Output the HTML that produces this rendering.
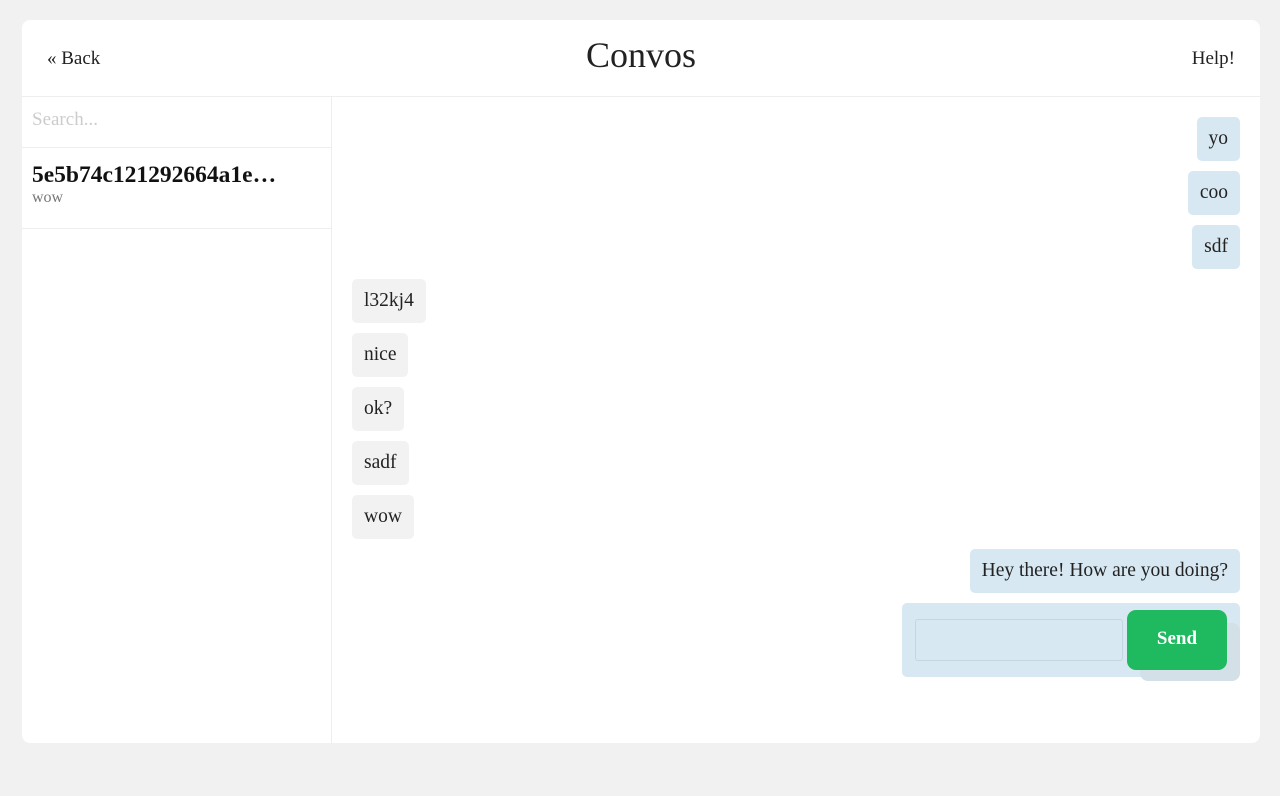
<!DOCTYPE html>
<html><head><style>
*{box-sizing:border-box;margin:0;padding:0}
body{width:1280px;height:796px;background:#f1f1f1;font-family:"Liberation Serif",serif;color:#222;position:relative;overflow:hidden}
.card{position:absolute;left:22px;top:20px;width:1238px;height:723px;background:#fff;border-radius:8px;overflow:hidden}
.hdr{height:77px;border-bottom:1px solid #eee;position:relative}
.back{position:absolute;left:25px;top:28px;font-size:19px}
.help{position:absolute;right:25px;top:28px;font-size:19px}
.title{position:absolute;left:0;right:0;top:14px;text-align:center;font-size:36px}
.side{position:absolute;left:0;top:77px;width:310px;bottom:0;border-right:1px solid #eee}
.search{height:51px;border-bottom:1px solid #eee;padding:12px 10px;font-size:19px;color:#ccc}
.conv{height:81px;border-bottom:1px solid #eee;padding:14px 10px}
.conv b{font-size:23.5px;display:block;color:#111}
.conv span{font-size:16px;color:#777}
.m{position:absolute;font-size:19.5px;padding:0 12px;height:44px;line-height:44px;border-radius:5px}
.r{background:#d7e8f2;right:20px}
.l{background:#f2f2f2;left:330px}
.form{position:absolute;left:880px;top:583px;width:338px;height:74px;background:#d7e8f2;border-radius:5px}
.inp{position:absolute;left:13px;top:16px;width:208px;height:42px;border:1px solid #c5d6e0;border-radius:3px}
.shadow{position:absolute;left:238px;top:20px;width:100px;height:58px;background:#d3e0e8;border-radius:8px}
.btn{position:absolute;left:225px;top:7px;width:100px;height:60px;background:#1fb95f;border-radius:9px;color:#fff;font-weight:bold;font-size:19px;text-align:center;line-height:58px}
</style></head><body>
<div class="card">
<div class="hdr"><div class="back">« Back</div><div class="title">Convos</div><div class="help">Help!</div></div>
<div class="side"><div class="search">Search...</div><div class="conv"><b>5e5b74c121292664a1e…</b><span>wow</span></div></div>
<div class="m r" style="top:97px">yo</div>
<div class="m r" style="top:151px">coo</div>
<div class="m r" style="top:205px">sdf</div>
<div class="m l" style="top:259px">l32kj4</div>
<div class="m l" style="top:313px">nice</div>
<div class="m l" style="top:367px">ok?</div>
<div class="m l" style="top:421px">sadf</div>
<div class="m l" style="top:475px">wow</div>
<div class="m r" style="top:529px">Hey there! How are you doing?</div>
<div class="form"><div class="inp"></div><div class="shadow"></div><div class="btn">Send</div></div>
</div>
</body></html>
